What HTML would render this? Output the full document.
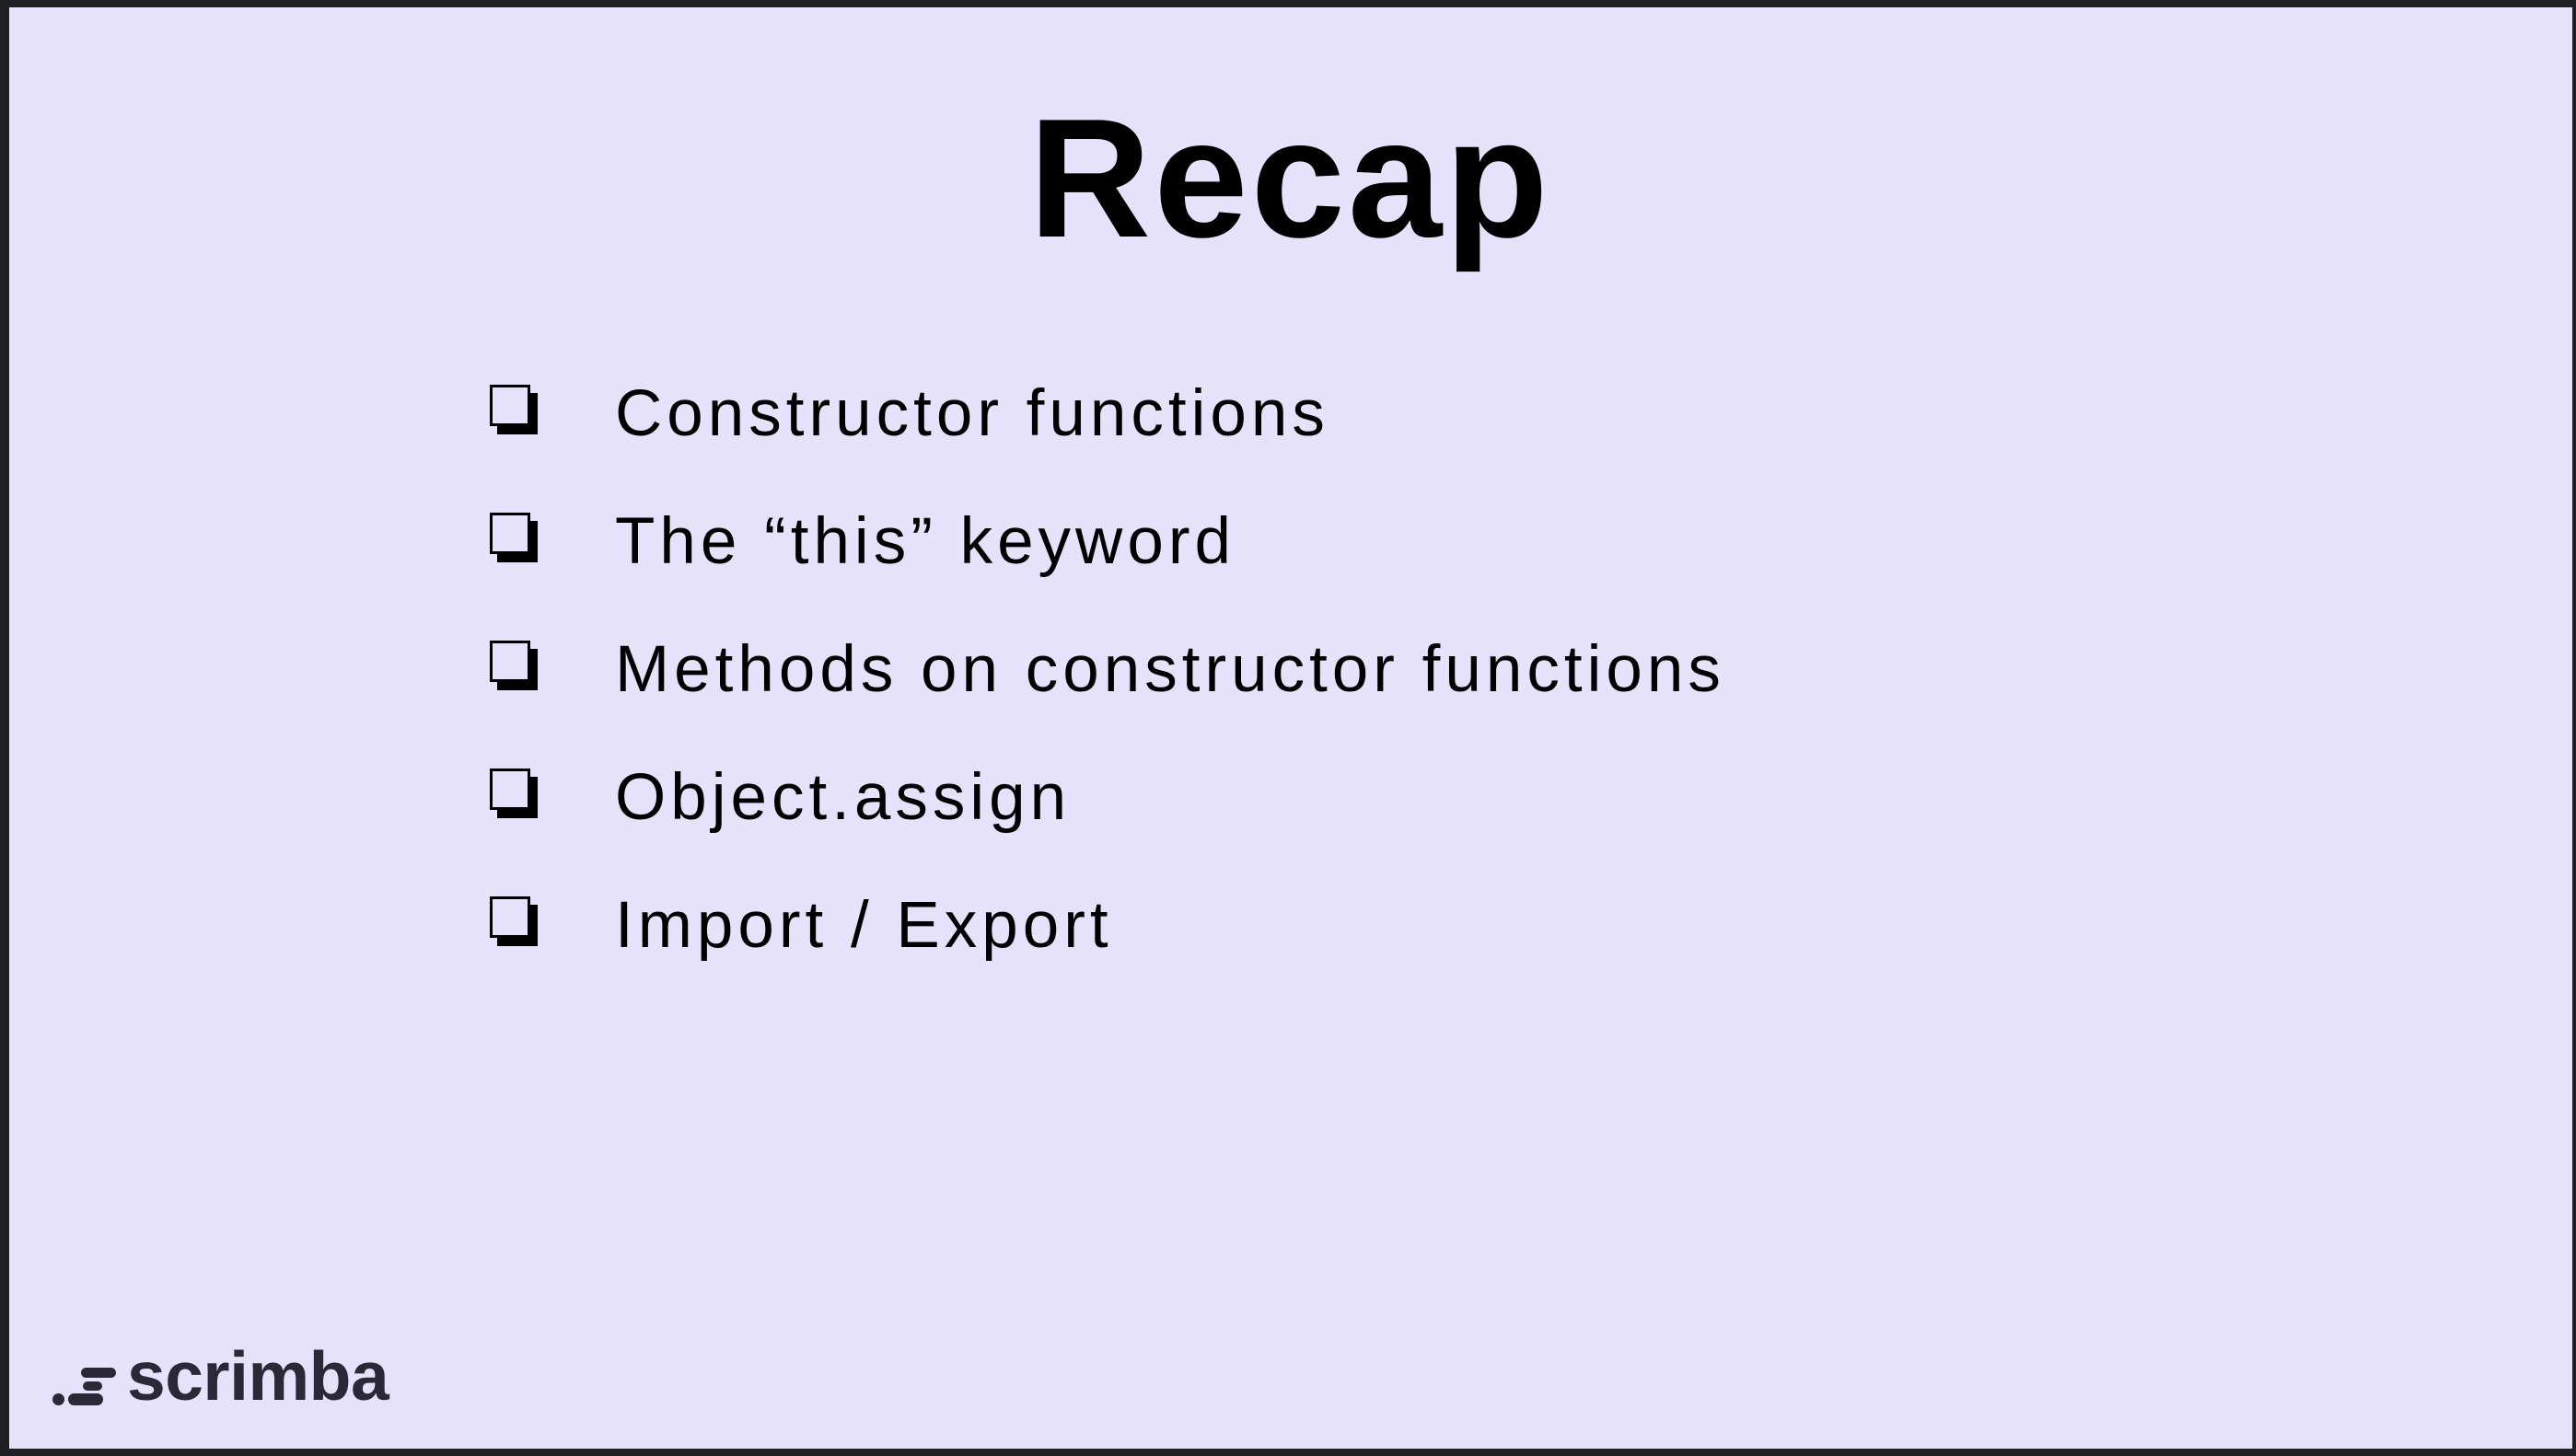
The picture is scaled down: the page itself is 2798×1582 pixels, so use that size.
<!DOCTYPE html>
<html><head><meta charset="utf-8"><style>
html,body{margin:0;padding:0}
body{width:2798px;height:1582px;background:#1e2024;position:relative;overflow:hidden;font-family:"Liberation Sans",sans-serif}
.slide{position:absolute;left:10px;top:8px;width:2784px;height:1566px;background:#e6e2fb}
.title{position:absolute;left:0;width:2798px;top:93px;text-align:center;font-weight:bold;font-size:184px;line-height:200px;color:#000}
.title span{display:inline-block;letter-spacing:3px;margin-left:4px}
.item{position:absolute;left:668px;font-size:71px;color:#000;letter-spacing:5px;line-height:80px;white-space:nowrap}
.box{position:absolute;width:38px;height:39px;border:3px solid #000;background:#e6e2fb;box-shadow:8px 9px 0 #000}
.logo{position:absolute;left:138px;top:1450px;font-weight:bold;font-size:75px;color:#2b2838;letter-spacing:-0.5px;line-height:90px}
.b{position:absolute;background:#2b2838;border-radius:7px}
</style></head><body>
<div class="slide"></div>
<div class="title"><span>Recap</span></div>

<div class="box" style="left:532px;top:418px"></div>
<div class="item" style="top:410px">Constructor functions</div>
<div class="box" style="left:532px;top:557px"></div>
<div class="item" style="top:549px">The “this” keyword</div>
<div class="box" style="left:532px;top:696px"></div>
<div class="item" style="top:688px">Methods on constructor functions</div>
<div class="box" style="left:532px;top:835px"></div>
<div class="item" style="top:827px">Object.assign</div>
<div class="box" style="left:532px;top:974px"></div>
<div class="item" style="top:966px">Import / Export</div>

<div class="b" style="left:57px;top:1514px;width:13px;height:13px;border-radius:50%"></div>
<div class="b" style="left:74px;top:1514px;width:38px;height:13px"></div>
<div class="b" style="left:90px;top:1501px;width:21px;height:10px;border-radius:5px"></div>
<div class="b" style="left:88px;top:1486px;width:38px;height:11px"></div>
<div class="logo">scrimba</div>
</body></html>
